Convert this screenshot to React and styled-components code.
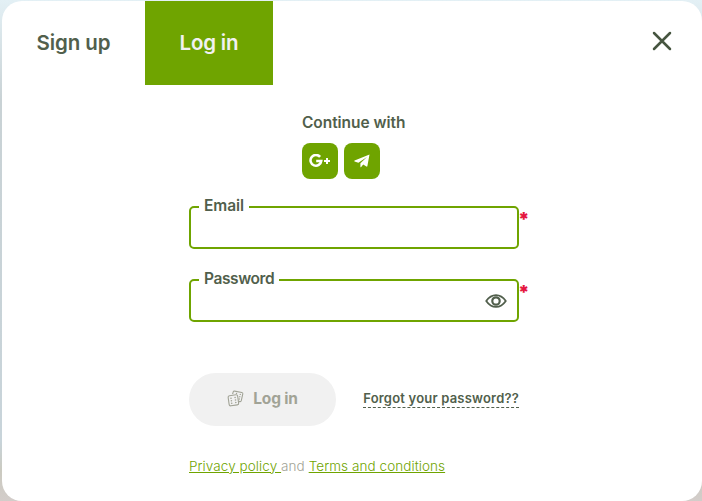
import styled, { createGlobalStyle } from 'styled-components';

const GlobalStyle = createGlobalStyle`
    * {
        box-sizing: border-box;
    }
    body {
        margin: 0;
        overflow: hidden;
        font-family: Inter, "Liberation Sans", sans-serif;
        color: #515f4c;
    }
    button {
        font-family: inherit;
        border: none;
        cursor: pointer;
    }
`;

function GoogleIcon() {
    return (
        <svg width="22" height="14" viewBox="0 0 22 14" fill="none" stroke="#fff">
            <path d="M11.1 2.9A5.4 5.4 0 1 0 12.3 6.9H7.2" strokeWidth="2.5" />
            <path d="M18 3.9v6M15 6.9h6" strokeWidth="2" />
        </svg>
    );
}

function TelegramIcon() {
    return (
        <svg width="16" height="14" viewBox="0 0 16 14" fill="#fff">
            <path d="M15.5.4.6 6.6c-.5.2-.4.7 0 .8l3.8 1.3L13 3 6.4 9.3v3.4c0 .6.5.7.8.3l2-2.4 3.2 2c.5.3.9.1 1-.5L15.5.4Z" />
        </svg>
    );
}

function EyeIcon() {
    return (
        <svg width="22" height="14" viewBox="0 0 22 14" fill="none" stroke="#515f4c">
            <path d="M1.2 7C4 3 7 1.1 11 1.1S18 3 20.8 7C18 11 15 12.9 11 12.9S4 11 1.2 7Z" strokeWidth="1.8" strokeLinejoin="round" />
            <circle cx="11" cy="7" r="3.7" strokeWidth="2.2" />
        </svg>
    );
}

function DiceIcon() {
    return (
        <svg width="17" height="17" viewBox="0 0 17 17" fill="none" stroke="#a1a396" strokeWidth="1.1">
            <path d="M5.6 4.2 6.2 1.9Q6.5.9 7.6 1.1L14.8 2.5Q16 2.8 15.8 3.9L14.3 10.7Q14 11.8 12.8 11.6L11.8 11.4" />
            <rect x="1.6" y="5.2" width="9.6" height="10.2" rx="1.6" transform="rotate(-8 6.4 10.3)" />
            <g fill="#a1a396" stroke="none">
                <circle cx="4" cy="8.2" r=".8" />
                <circle cx="4.4" cy="10.7" r=".8" />
                <circle cx="4.7" cy="13.2" r=".8" />
                <circle cx="8.1" cy="7.5" r=".8" />
                <circle cx="8.5" cy="10" r=".8" />
                <circle cx="8.8" cy="12.5" r=".8" />
                <circle cx="9.5" cy="3.4" r=".7" />
                <circle cx="13.3" cy="4.4" r=".7" />
                <circle cx="12.8" cy="6.7" r=".7" />
                <circle cx="12.3" cy="9" r=".7" />
            </g>
        </svg>
    );
}

function App() {
    return (
        <Page>
            <GlobalStyle />
            <Modal>
                <Header>
                    <Tab $width={143} $spacing={-0.1}>Sign up</Tab>
                    <Tab $width={128} $spacing={-0.2} $active>Log in</Tab>
                    <CloseButton aria-label="Close">
                        <svg width="20" height="20" viewBox="0 0 20 20" stroke="#465540" strokeWidth="2.5" strokeLinecap="round">
                            <path d="M2 2l16 16M18 2 2 18" />
                        </svg>
                    </CloseButton>
                </Header>
                <Form onSubmit={(e) => e.preventDefault()}>
                    <Social>
                        <span>Continue with</span>
                        <div className="buttons">
                            <SocialButton type="button" aria-label="Google"><GoogleIcon /></SocialButton>
                            <SocialButton type="button" aria-label="Telegram"><TelegramIcon /></SocialButton>
                        </div>
                    </Social>
                    <Field $spacing={-0.1}>
                        <legend>Email</legend>
                        <input type="text" aria-label="Email" />
                        <Required>*</Required>
                    </Field>
                    <Field $spacing={-0.4}>
                        <legend>Password</legend>
                        <input type="password" aria-label="Password" />
                        <EyeIcon />
                        <Required>*</Required>
                    </Field>
                    <Actions>
                        <SubmitButton type="submit"><DiceIcon /><span>Log in</span></SubmitButton>
                        <Forgot>Forgot your password??</Forgot>
                    </Actions>
                    <Terms>
                        <u>Privacy policy </u>and <u>Terms and conditions</u>
                    </Terms>
                </Form>
            </Modal>
        </Page>
    );
}

const Page = styled.div`
    height: 501px;
    padding: 1px 0 0 2px;
    background: linear-gradient(180deg, #e3f0f5 0%, #c9d2d5 20%, #c8d4da 88%, #cbcac0 94%, #d3cdca 100%);
`;

const Modal = styled.div`
    width: 700px;
    height: 500px;
    overflow: hidden;
    border-radius: 20px;
    background: #fff;
`;

const Header = styled.div`
    display: flex;
    height: 84px;
`;

const Tab = styled.button`
    width: ${(p) => p.$width}px;
    padding: 0 0 2px;
    font-size: 20.5px;
    font-weight: 600;
    letter-spacing: ${(p) => p.$spacing}px;
    white-space: nowrap;
    color: ${(p) => (p.$active ? '#f1f1f1' : '#515f4c')};
    background: ${(p) => (p.$active ? '#6fa400' : 'transparent')};
`;

const CloseButton = styled.button`
    display: flex;
    align-items: center;
    height: 80px;
    margin: 0 30px 0 auto;
    padding: 0;
    background: none;
`;

const Form = styled.form`
    width: 330px;
    margin-left: 187px;
`;

const Social = styled.div`
    margin: 28px 0 0 113px;
    font-size: 15.5px;
    font-weight: 600;
    line-height: 20px;
    letter-spacing: -0.05px;
    span {
        display: block;
    }
    .buttons {
        display: flex;
        gap: 6px;
        margin-top: 10px;
    }
`;

const SocialButton = styled.button`
    display: flex;
    align-items: center;
    justify-content: center;
    width: 36px;
    height: 36px;
    padding: 0;
    border-radius: 8px;
    background: #6fa400;
`;

const Field = styled.fieldset`
    position: relative;
    height: 52px;
    margin: 18px 0 21px;
    padding: 0 8px;
    border: 2px solid #6fa400;
    border-radius: 5px;
    legend {
        height: 20px;
        padding: 0 5px;
        font-size: 15.5px;
        font-weight: 600;
        line-height: 17px;
        letter-spacing: ${(p) => p.$spacing}px;
    }
    input {
        width: 270px;
        height: 24px;
        padding: 0;
        border: none;
        outline: none;
        background: none;
    }
    svg {
        position: absolute;
        right: 10px;
        top: 4px;
    }
    & + & {
        margin-top: 0;
    }
`;

const Required = styled.span`
    position: absolute;
    left: 327px;
    top: -7px;
    font-family: Inter, sans-serif;
    font-size: 19px;
    font-weight: 900;
    line-height: 20px;
    color: #e5173f;
`;

const Actions = styled.div`
    display: flex;
    align-items: center;
    justify-content: space-between;
    margin-top: 51px;
`;

const SubmitButton = styled.button`
    display: flex;
    align-items: center;
    justify-content: center;
    gap: 9px;
    width: 147px;
    height: 53px;
    padding: 0 0 2px;
    border-radius: 27px;
    font-size: 15.5px;
    font-weight: 700;
    letter-spacing: -0.2px;
    color: #a1a396;
    background: #f1f1f1;
`;

const Forgot = styled.a`
    height: 18px;
    margin-bottom: 1px;
    font-size: 13px;
    font-weight: 600;
    line-height: 17px;
    letter-spacing: 0.2px;
    border-bottom: 1px dashed #515f4c;
    white-space: nowrap;
`;

const Terms = styled.div`
    margin-top: 30px;
    font-size: 13.5px;
    font-weight: 300;
    line-height: 20px;
    letter-spacing: 0.07px;
    white-space: nowrap;
    color: #a1a396;
    u {
        color: #6fa400;
    }
`;

export default App;
